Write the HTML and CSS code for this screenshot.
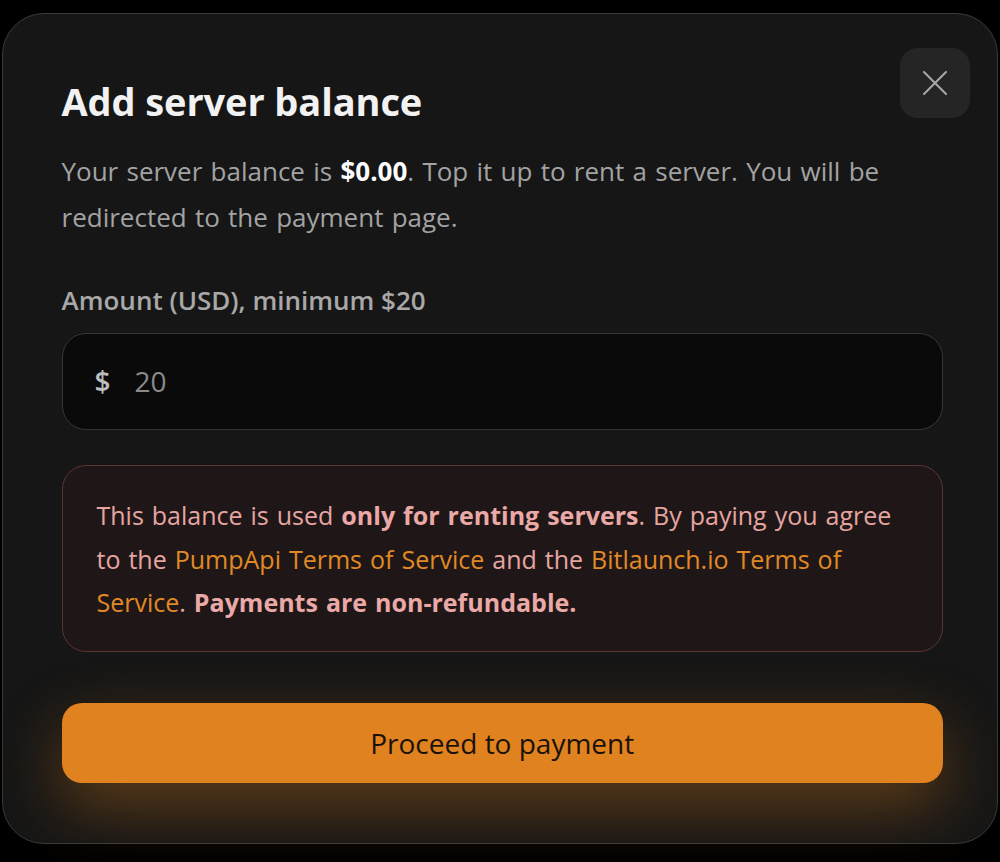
FILE: index.html
```html
<!DOCTYPE html>
<html lang="en">
<head>
<meta charset="utf-8">
<title>Add server balance</title>
<link rel="stylesheet" href="styles.css">
</head>
<body>
<div class="modal">
  <button class="close" aria-label="Close">
    <svg width="24" height="24" viewBox="0 0 24 24" fill="none" stroke="currentColor" stroke-width="2" stroke-linecap="round"><path d="M1 1L23 23M23 1L1 23"/></svg>
  </button>
  <h1 class="title">Add server balance</h1>
  <p class="desc">Your server balance is <strong>$0.00</strong>. Top it up to rent a server. You will be redirected to the payment page.</p>
  <label class="label" for="amt">Amount (USD), minimum $20</label>
  <div class="input">
    <span class="cur">$</span>
    <span class="val" id="amt">20</span>
  </div>
  <div class="notice">
    This balance is used <strong>only for renting servers</strong>. By paying you agree to the <a href="#">PumpApi Terms of Service</a> and the <a href="#">Bitlaunch.io Terms of Service</a>. <strong>Payments are non-refundable.</strong>
  </div>
  <button class="pay">Proceed to payment</button>
</div>
</body>
</html>
```

FILE: styles.css
```css
html, body {
  margin: 0;
  padding: 0;
  background: #000;
  height: 100%;
}
body {
  font-family: "Open Sans", "Noto Sans", sans-serif;
  overflow: hidden;
}
.modal {
  position: relative;
  box-sizing: border-box;
  margin: 13px 2px 0 2px;
  height: 831px;
  border: 1.5px solid #3a3a3a;
  border-radius: 42px;
  background: #161616;
  padding: 66.5px 54px 0 58.5px;
  display: flex;
  flex-direction: column;
}
.close {
  position: absolute;
  top: 34px;
  right: 27px;
  width: 70px;
  height: 70px;
  border: none;
  border-radius: 18px;
  background: #252525;
  color: #a8a8a8;
  display: flex;
  align-items: center;
  justify-content: center;
  padding: 0;
}
.title {
  margin: 0;
  font-size: 38px;
  font-weight: 700;
  color: #f2f2f2;
  line-height: 40px;
  letter-spacing: -0.1px;
}
.desc {
  margin: 27px 0 0;
  font-size: 26px;
  line-height: 46px;
  word-spacing: 1.5px;
  color: #a3a3a3;
}
.desc strong {
  color: #fff;
  font-weight: 700;
}
.label {
  display: block;
  margin-top: 40px;
  font-size: 26px;
  font-weight: 600;
  color: #a8a8a8;
  line-height: 40px;
}
.input {
  margin-top: 13px;
  height: 97px;
  box-sizing: border-box;
  border: 1.5px solid #353535;
  border-radius: 24px;
  background: #0a0a0a;
  display: flex;
  align-items: center;
  padding-left: 32px;
  gap: 24px;
  font-size: 28px;
}
.cur {
  color: #bdbdbd;
  font-weight: 600;
}
.val {
  color: #8a8a8a;
}
.notice {
  margin-top: 35px;
  box-sizing: border-box;
  height: 187px;
  border: 1.5px solid #5b3431;
  border-radius: 24px;
  background: #1f1717;
  padding: 28.5px 34px 0 34px;
  font-size: 25px;
  line-height: 43.5px;
  word-spacing: 1.5px;
  color: #e6a5a1;
}
.notice strong {
  font-weight: 700;
  color: #eaa9a6;
}
.notice a {
  color: #e08a26;
  text-decoration: none;
}
.pay {
  margin-top: 51px;
  height: 80px;
  flex: none;
  border: none;
  border-radius: 20px;
  background: #e0821f;
  color: #1a120a;
  font-family: "Open Sans", "Noto Sans", sans-serif;
  font-size: 28px;
  font-weight: 500;
  box-shadow: 0 24px 64px rgba(224, 130, 31, 0.36);
}
```
